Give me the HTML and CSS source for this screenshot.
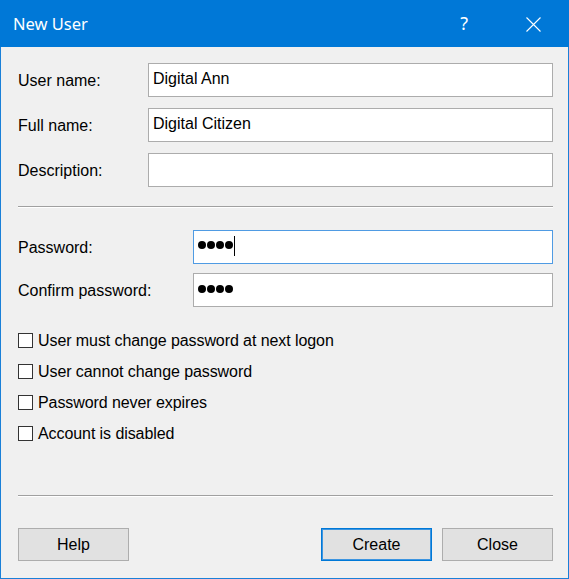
FILE: index.html
```html
<!DOCTYPE html>
<html>
<head>
<meta charset="utf-8">
<title>New User</title>
<link rel="stylesheet" href="styles.css">
</head>
<body>
<div class="window">
  <div class="titlebar">
    <span class="title">New User</span>
    <span class="help">?</span>
    <span class="close">
      <svg width="15" height="15" viewBox="0 0 15 15"><path d="M0.5 0.5 L14.5 14.5 M14.5 0.5 L0.5 14.5" stroke="#fff" stroke-width="1.1" fill="none"/></svg>
    </span>
  </div>
  <div class="content">
    <div class="grid grid-a">
      <div class="label">User name:</div>
      <div class="field">Digital Ann</div>
      <div class="label">Full name:</div>
      <div class="field">Digital Citizen</div>
      <div class="label">Description:</div>
      <div class="field"></div>
    </div>
    <div class="sep"></div>
    <div class="grid grid-b">
      <div class="label">Password:</div>
      <div class="field focused"><span class="dots"><i></i><i></i><i></i><i></i></span><span class="caret"></span></div>
      <div class="label">Confirm password:</div>
      <div class="field"><span class="dots dots-low"><i></i><i></i><i></i><i></i></span></div>
    </div>
    <div class="checks">
      <div class="check"><span class="box"></span><span>User must change password at next logon</span></div>
      <div class="check"><span class="box"></span><span>User cannot change password</span></div>
      <div class="check"><span class="box"></span><span>Password never expires</span></div>
      <div class="check"><span class="box"></span><span>Account is disabled</span></div>
    </div>
    <div class="sep sep-bottom"></div>
    <div class="buttons">
      <div class="btn">Help</div>
      <div class="spacer"></div>
      <div class="btn default">Create</div>
      <div class="btn">Close</div>
    </div>
  </div>
</div>
</body>
</html>
```
FILE: styles.css
```css
html, body {
  margin: 0;
  padding: 0;
  background: #f0f0f0;
}
.window {
  box-sizing: border-box;
  width: 569px;
  height: 579px;
  border: 1px solid #1a80d8;
  border-top: none;
  background: #f0f0f0;
  font-family: "Liberation Sans", Arial, sans-serif;
  font-size: 16px;
  color: #000;
  display: flex;
  flex-direction: column;
}
.titlebar {
  height: 47px;
  margin: 0 -1px;
  background: #0078d7;
  color: #fff;
  display: flex;
  align-items: center;
  font-family: "Noto Sans", "Open Sans", sans-serif;
}
.title {
  flex: 1;
  padding-left: 13px;
  font-size: 16.5px;
  padding-bottom: 1px;
}
.help {
  font-size: 18px;
  margin-right: 58px;
  padding-bottom: 1px;
}
.close {
  display: flex;
  margin-right: 28px;
  padding-top: 1px;
}
.content {
  padding: 16px 15px 0 17px;
  display: flex;
  flex-direction: column;
}
.grid {
  display: grid;
  row-gap: 11px;
  align-items: center;
}
.grid-a {
  grid-template-columns: 130px 1fr;
  grid-auto-rows: 34px;
}
.grid-b {
  grid-template-columns: 175px 1fr;
  grid-auto-rows: 34px;
  row-gap: 9px;
  margin-top: 22px;
}
.label {
  padding-top: 1px;
}
.field {
  box-sizing: border-box;
  height: 34px;
  background: #fff;
  border: 1px solid #acacac;
  padding: 0 4px 3px;
  display: flex;
  align-items: center;
  position: relative;
}
.field.focused {
  border-color: #4f9be3;
}
.dots {
  display: flex;
  gap: 1px;
  margin-bottom: 2px;
}
.dots i {
  display: block;
  width: 8px;
  height: 8px;
  border-radius: 50%;
  background: #000;
}
.dots-low {
  margin-bottom: 0;
}
.caret {
  display: block;
  width: 1px;
  height: 20px;
  background: #000;
  margin-left: 1px;
  margin-top: 1px;
}
.sep {
  height: 0;
  border-top: 1px solid #a0a0a0;
  border-bottom: 1px solid #ffffff;
  margin-top: 19px;
}
.sep-bottom {
  margin-top: 46px;
}
.checks {
  margin-top: 18px;
  display: flex;
  flex-direction: column;
  letter-spacing: -0.08px;
}
.check {
  height: 31px;
  display: flex;
  align-items: center;
  gap: 5px;
}
.box {
  box-sizing: border-box;
  width: 15px;
  height: 15px;
  border: 1px solid #333;
  background: #fff;
}
.buttons {
  margin-top: 31px;
  display: flex;
  gap: 10px;
}
.spacer {
  flex: 1;
}
.btn {
  box-sizing: border-box;
  width: 111px;
  height: 33px;
  background: #e1e1e1;
  border: 1px solid #adadad;
  display: flex;
  align-items: center;
  justify-content: center;
  padding-top: 1px;
}
.btn.default {
  border-color: #0078d7;
  box-shadow: inset 0 0 0 1px #3d95e0;
}
```
